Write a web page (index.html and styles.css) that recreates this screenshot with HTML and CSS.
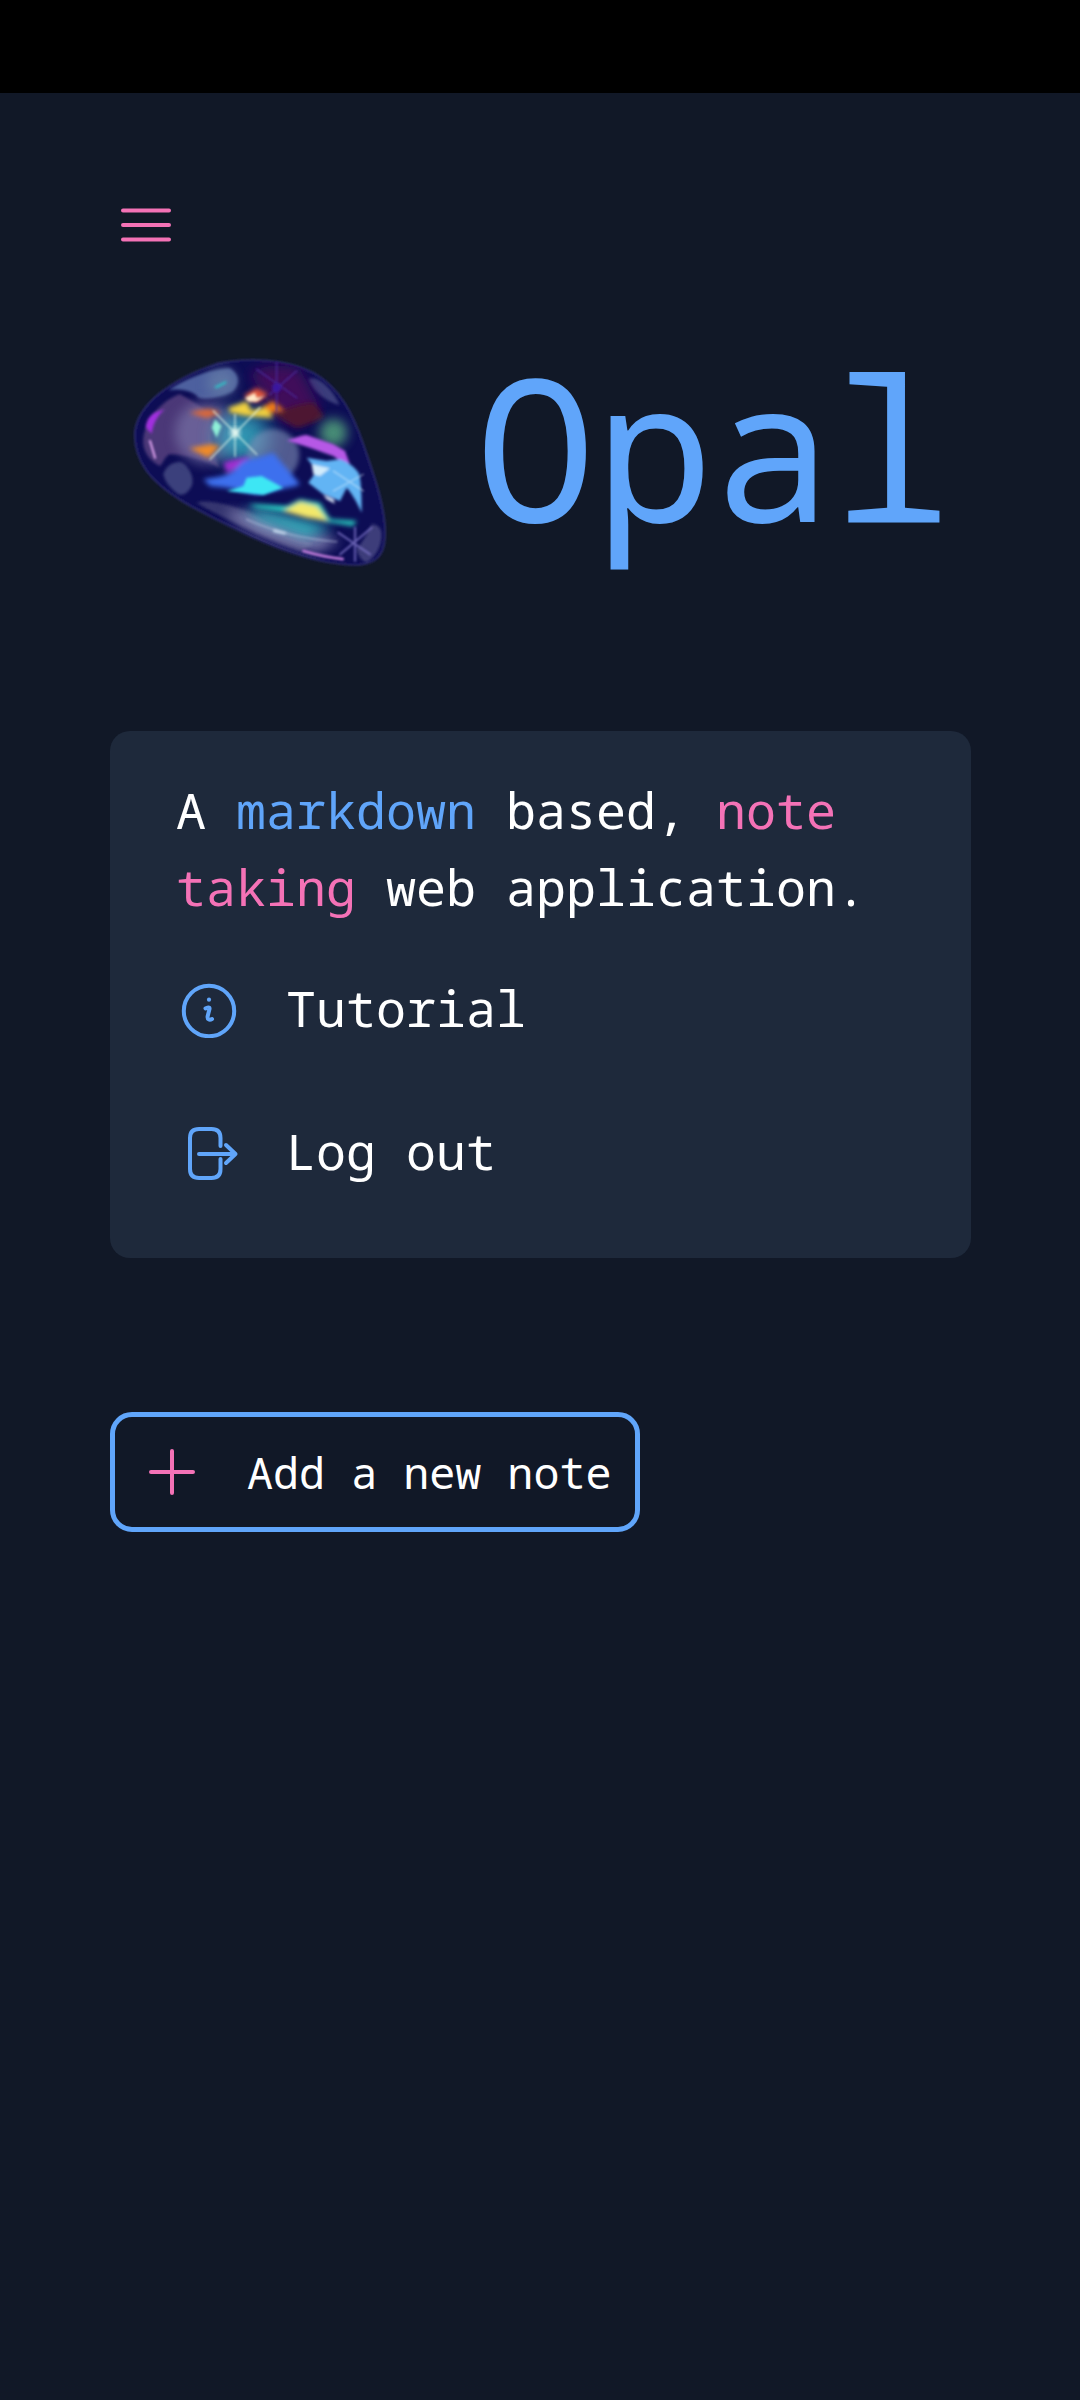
FILE: index.html
```html
<!DOCTYPE html>
<html lang="en">
<head>
    <meta charset="UTF-8">
    <meta name="viewport" content="width=device-width, initial-scale=1.0">
    <title>Opal</title>
    <link rel="stylesheet" href="styles.css">
</head>
<body>
    <div class="status-bar"></div>
    <main class="page">
        <button class="menu-btn" aria-label="Menu">
            <svg width="50" height="36" viewBox="0 0 50 36" fill="none" stroke="#f472b6" stroke-width="4" stroke-linecap="round">
                <path d="M2 3.5H48M2 18H48M2 32.5H48"/>
            </svg>
        </button>

        <div class="brand">
            <svg class="opal" width="320" height="260" viewBox="0 0 960 780">
                <defs>
                    <filter id="b3" x="-10%" y="-10%" width="120%" height="120%"><feGaussianBlur stdDeviation="3"/></filter>
                    <filter id="b5" x="-20%" y="-20%" width="140%" height="140%"><feGaussianBlur stdDeviation="5"/></filter>
                    <filter id="b8" x="-30%" y="-30%" width="160%" height="160%"><feGaussianBlur stdDeviation="8"/></filter>
                    <filter id="b18" x="-60%" y="-60%" width="220%" height="220%"><feGaussianBlur stdDeviation="18"/></filter>
                    <filter id="b30" x="-80%" y="-80%" width="260%" height="260%"><feGaussianBlur stdDeviation="30"/></filter>
                    <clipPath id="stone">
                        <path d="M105 300C115 225 200 150 350 98C440 78 560 85 640 125C720 170 760 250 790 340C825 440 860 540 855 620C852 680 820 702 760 702C680 700 560 670 430 605C320 550 200 500 140 420C115 385 102 340 105 300Z"/>
                    </clipPath>
                </defs>
                <path d="M105 300C115 225 200 150 350 98C440 78 560 85 640 125C720 170 760 250 790 340C825 440 860 540 855 620C852 680 820 702 760 702C680 700 560 670 430 605C320 550 200 500 140 420C115 385 102 340 105 300Z" fill="#0e0a55" stroke="#2c2b72" stroke-width="5" filter="url(#b3)"/>
                <g clip-path="url(#stone)">
                    <g filter="url(#b5)">
                        <path d="M130 320C140 260 190 205 240 190C280 210 320 240 330 250C340 290 320 330 360 410C330 395 260 370 210 370C195 375 190 395 180 405C150 390 125 360 130 320Z" fill="#4b3878"/>
                        <path d="M205 178C260 140 340 112 390 112C420 130 420 160 400 180C380 195 320 210 295 200C285 185 250 170 205 178Z" fill="#4d609f"/>
                        <path d="M625 145C650 130 700 175 718 222C690 215 640 190 625 145Z" fill="#3a3d7c"/>
                        <path d="M190 430C195 410 215 392 240 393C265 400 285 440 275 465C265 485 250 495 235 490C215 475 195 455 190 430Z" fill="#3b3f7c"/>
                        <path d="M290 515C320 505 370 515 440 540L640 640L600 660C520 630 380 570 290 515Z" fill="#34346f"/>
                        <path d="M770 655C790 630 805 600 815 580C830 580 845 590 845 610C845 650 825 680 800 695C785 690 775 675 770 655Z" fill="#3c3c7a"/>
                    </g>
                    <path d="M450 130C480 105 540 95 600 115C630 170 650 210 660 230C620 270 590 280 560 280C530 250 510 220 500 210C480 170 460 150 450 130Z" fill="#3f0f5a" filter="url(#b18)"/>
                    <path d="M520 250C570 225 620 215 640 215C660 235 670 250 670 260C640 275 610 285 590 290Z" fill="#4e1230" filter="url(#b8)"/>
                    <circle cx="320" cy="305" r="95" fill="#7a76a8" opacity=".65" filter="url(#b18)"/>
                    <circle cx="700" cy="305" r="42" fill="#4f9c7a" opacity=".9" filter="url(#b18)"/>
                    <circle cx="365" cy="155" r="44" fill="#6b84a8" opacity=".6" filter="url(#b18)"/>
                    <circle cx="430" cy="320" r="80" fill="#39b6c8" opacity=".8" filter="url(#b30)"/>
                    <circle cx="520" cy="372" r="78" fill="#8090b8" opacity=".6" filter="url(#b8)"/>
                    <path d="M375 540C480 540 620 590 720 630L650 665C560 640 450 620 375 540Z" fill="#a6a6d0" opacity=".65" filter="url(#b18)"/>
                    <path d="M430 530C520 540 640 570 700 590L620 620L480 570Z" fill="#2fb7c0" opacity=".85" filter="url(#b18)"/>
                </g>
                <g filter="url(#b8)">
                    <path d="M268 245C290 240 320 232 335 235L365 245L320 262Z" fill="#d9683a"/>
                    <path d="M385 230L440 210L455 240L500 225L520 262L440 255L390 245Z" fill="#f2d23f"/>
                    <path d="M430 195L470 170L505 190L470 215Z" fill="#e2563a"/>
                    <path d="M490 225L520 210L555 240L510 245Z" fill="#f07a16"/>
                    <path d="M268 352L330 340L360 345L325 380Z" fill="#f08a25"/>
                    <path d="M370 395C395 385 420 385 445 375L445 395L380 425Z" fill="#a02fd0"/>
                    <path d="M310 445C330 440 370 440 400 420C420 400 430 385 445 385C480 380 500 370 520 365C550 400 585 440 600 460C580 470 560 470 540 475L470 490L380 470L330 465Z" fill="#3d6fee"/>
                    <path d="M445 520L560 525L600 505L660 515L690 565L770 570L760 585L680 572L570 545L470 530Z" fill="#29d8c8"/>
                    <path d="M550 540L600 512L650 525L685 570L620 560Z" fill="#f3e86b"/>
                </g>
                <g filter="url(#b5)">
                    <path d="M138 290C140 265 150 245 195 235C175 250 160 275 155 308Z" fill="#a22fe0"/>
                    <path d="M342 168L378 150L380 156L350 172Z" fill="#29c5c8"/>
                    <path d="M435 200L465 185L470 200L495 195L470 212L445 212Z" fill="#ffe9c9"/>
                    <path d="M345 265L365 285L350 320L335 290Z" fill="#8ff0d8"/>
                    <path d="M560 328C580 325 600 312 620 312L700 340L735 360L755 415L700 375L630 350Z" fill="#b658e6"/>
                    <path d="M380 480L430 465L440 440L485 435L550 470L490 492L430 485Z" fill="#3ee6f4"/>
                    <path d="M620 380L680 390L720 385C750 395 770 415 778 430C785 470 785 510 785 545C770 510 750 480 740 470L720 510L670 490L625 455L650 420Z" fill="#62b4f4"/>
                    <path d="M635 400L690 412L660 435L640 430Z" fill="#d3ecfb"/>
                    <path d="M670 492L700 505L705 518L680 505Z" fill="#e4f2ff"/>
                    <path d="M520 595L560 605L555 610L520 602Z" fill="#dff2ff"/>
                </g>
                <g fill="none" stroke-linecap="round" filter="url(#b3)">
                    <path d="M150 330L165 380" stroke="#d49ae6" stroke-width="7"/>
                    <path d="M610 660C650 672 690 680 728 684" stroke="#c87fe0" stroke-width="8"/>
                    <path d="M440 565C520 600 620 625 710 632" stroke="#b9c3e0" stroke-width="5" opacity=".55"/>
                    <!-- sparkles -->
                    <path d="M330 385L480 230M340 240L470 370M405 250V375" stroke="#e9fff0" stroke-width="5" opacity=".65"/>
                    <path d="M470 115L590 200M590 120L510 190M530 95V240" stroke="#4a2a9a" stroke-width="5" opacity=".85"/>
                    <path d="M720 670L815 590M715 605L810 670M765 590V690" stroke="#7a72c4" stroke-width="6" opacity=".85"/>
                    <path d="M700 480L790 430M700 420L790 480" stroke="#d8efff" stroke-width="4" opacity=".55"/>
                </g>
                <circle cx="405" cy="305" r="14" fill="#f4fff6" opacity=".9" filter="url(#b8)"/>
                <circle cx="530" cy="170" r="14" fill="#3a12a0" filter="url(#b5)"/>
            </svg>
            <h1 class="title">Opal</h1>
        </div>

        <section class="card">
            <p class="tagline">A <span class="blue">markdown</span> based, <span class="pink">note taking</span> web application.</p>
            <a class="card-link">
                <svg class="card-icon" width="64" height="60" viewBox="0 0 64 60" fill="none" stroke="#60a5fa" stroke-width="4" stroke-linecap="round" stroke-linejoin="round">
                    <circle cx="33" cy="33" r="25.2"/>
                    <path d="M29.5 30.5C31 29.5 34 28.5 33.5 31L31.7 38C31 41.5 33.5 42.5 36 41"/>
                    <circle cx="33" cy="21.7" r="2.1" fill="#60a5fa" stroke="none"/>
                </svg>
                <span>Tutorial</span>
            </a>
            <a class="card-link">
                <svg class="card-icon" width="64" height="60" viewBox="0 0 64 60" fill="none" stroke="#60a5fa" stroke-width="4" stroke-linecap="round" stroke-linejoin="round">
                    <path d="M44.5 25V17C44.5 11 41.5 8 35.5 8H23C17 8 14 11 14 17V48C14 54 17 57 23 57H35.5C41.5 57 44.5 54 44.5 48V38"/>
                    <path d="M23 33H59.5M50 24L59.5 33L50 42"/>
                </svg>
                <span>Log out</span>
            </a>
        </section>

        <button class="add-btn">
            <svg width="46" height="46" viewBox="0 0 46 46" fill="none" stroke="#f472b6" stroke-width="4" stroke-linecap="round">
                <path d="M23 2V44M2 23H44"/>
            </svg>
            <span>Add a new note</span>
        </button>
    </main>
</body>
</html>
```

FILE: styles.css
```css
* {
    box-sizing: border-box;
}
html, body {
    height: 100%;
}
body {
    margin: 0;
    background-color: #111827;
    color: white;
    font-family: "Noto Sans Mono", "Droid Sans Mono", "DejaVu Sans Mono", monospace;
}
.status-bar {
    height: 93px;
    background-color: black;
}
.page {
    padding: 0 109px 0 110px;
}
.menu-btn {
    display: block;
    margin: 114px 0 0 11px;
    padding: 0;
    background: none;
    border: none;
    line-height: 0;
}
.brand {
    display: flex;
    align-items: center;
    gap: 56px;
    margin: 88px 0 0 -10px;
}
.opal {
    flex: none;
}
.title {
    margin: -32px 0 0;
    font-size: 198px;
    font-weight: 400;
    line-height: 260px;
    color: #60a5fa;
}
.card {
    margin-top: 140px;
    padding: 41px 66px 36px;
    background-color: #1e293b;
    border-radius: 20px;
}
.tagline {
    margin: 0;
    font-size: 50px;
    line-height: 77px;
}
.blue {
    color: #60a5fa;
}
.pink {
    color: #f472b6;
}
.card-link {
    display: flex;
    align-items: center;
    gap: 46px;
    height: 142px;
    font-size: 50px;
}
.card-link:first-of-type {
    height: 144px;
    margin-top: 10px;
}
.card-icon {
    flex: none;
}
.add-btn {
    display: flex;
    align-items: center;
    gap: 52px;
    height: 120px;
    margin-top: 154px;
    padding: 0 24px 0 34px;
    background: none;
    border: 5px solid #60a5fa;
    border-radius: 22px;
    color: white;
    font-family: inherit;
    font-size: 43.4px;
}
```
